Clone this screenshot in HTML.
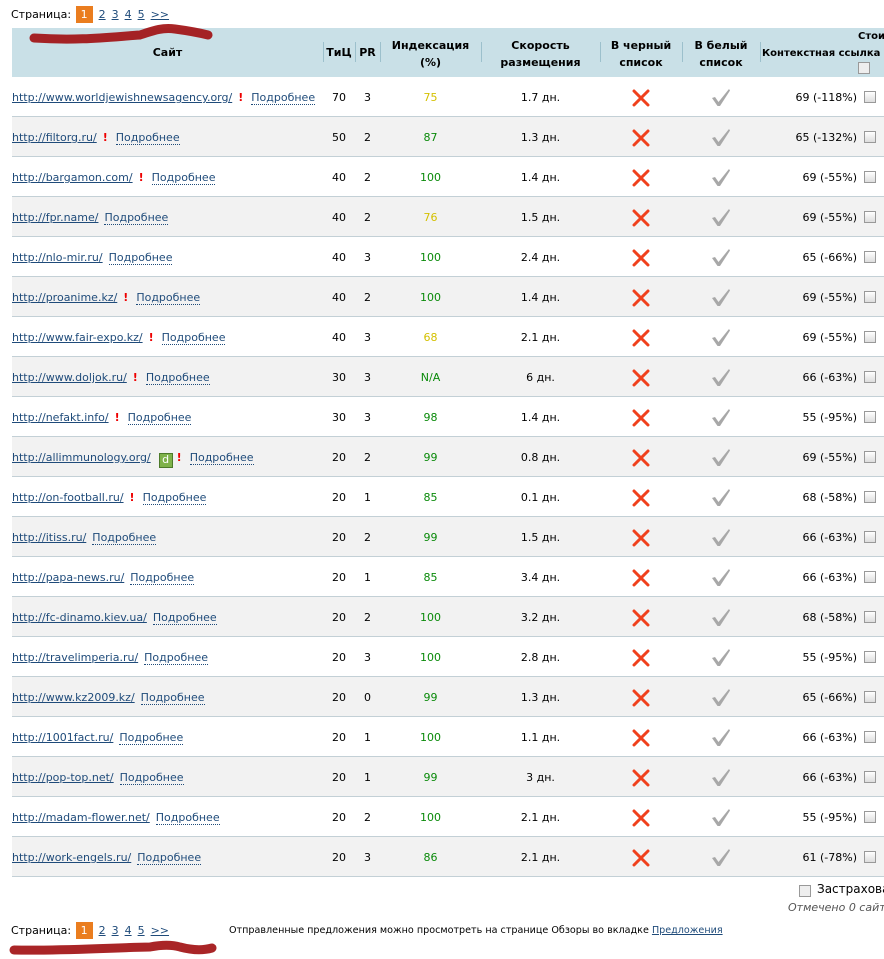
<!DOCTYPE html>
<html><head><meta charset="utf-8">
<style>
body{margin:0;width:884px;height:959px;overflow:hidden;background:#fff;font-family:"DejaVu Sans",Verdana,sans-serif;font-size:11px;color:#000;position:relative}
.pg{position:absolute;left:11px;font-size:11px;color:#000;z-index:3}
.pg a{color:#1f4b7a;text-decoration:underline;margin-left:6px}
.pg .cur{display:inline-block;background:#ea7d1f;color:#fff;padding:0 5px;margin-left:1px;line-height:17px}
.hd{position:absolute;left:12px;top:28px;width:872px;height:49px;background:#c9e0e7;font-weight:bold;font-size:11px}
.hd div{position:absolute;text-align:center;line-height:17px}
.sep{position:absolute;top:14px;height:20px;width:1px;background:#9cc0cc}
.r{position:absolute;left:12px;width:872px;height:39px;border-bottom:1px solid #c3d0d6;line-height:41px}
.r.g{background:#f2f2f2}
.r span{position:absolute;top:0}
.s{left:0;white-space:nowrap}
.s a{color:#1f4b7a;text-decoration:underline}
.s .p{color:#1f4b7a;text-decoration:none;border-bottom:1px dotted #1f4b7a;margin-left:6px}
.s b{color:#e00;margin-left:6px}
.s b+.p{margin-left:8px}
.t{left:311px;width:32px;text-align:center}
.pr{left:343px;width:25px;text-align:center}
.ix{left:368px;width:101px;text-align:center;color:#0a8a0a}
.ix.y{color:#d4c000}
.sp{left:469px;width:119px;text-align:center}
.x{left:588px;width:82px;text-align:center}
.c{left:670px;width:78px;text-align:center}
.pc{left:700px;width:145px;text-align:right}
.cb{left:852px;top:14px!important;width:10px;height:10px;border:1px solid #999;background:linear-gradient(#fff,#ddd)}
.d{display:inline-block;width:12px;height:13px;background:#7fb24a;color:#fff;border:1px solid #4d7a2a;line-height:12px;text-align:center;margin-left:8px;font-size:11px;vertical-align:-2px;font-style:normal}
.d+b{margin-left:4px}
.r svg{vertical-align:middle}
</style></head><body>
<div class="pg" style="top:6px">Страница: <span class="cur">1</span><a>2</a><a>3</a><a>4</a><a>5</a><a>&gt;&gt;</a></div>
<div class="hd">
<div style="left:0;width:311px;top:16px">Сайт</div>
<div class="sep" style="left:311px"></div>
<div style="left:311px;width:32px;top:16px">ТиЦ</div>
<div class="sep" style="left:343px"></div>
<div style="left:343px;width:25px;top:16px">PR</div>
<div class="sep" style="left:368px"></div>
<div style="left:368px;width:101px;top:9px">Индексация<br>(%)</div>
<div class="sep" style="left:469px"></div>
<div style="left:469px;width:119px;top:9px">Скорость<br>размещения</div>
<div class="sep" style="left:588px"></div>
<div style="left:588px;width:82px;top:9px">В черный<br>список</div>
<div class="sep" style="left:670px"></div>
<div style="left:670px;width:78px;top:9px">В белый<br>список</div>
<div class="sep" style="left:748px"></div>
<div style="left:750px;width:140px;top:0;text-align:left;white-space:nowrap;font-size:10px"><span style="position:absolute;left:96px">Стоимость</span><br>Контекстная ссылка</div>
<div style="left:846px;top:34px;width:10px;height:10px;border:1px solid #999;background:#eee"></div>
</div>
<svg style="position:absolute;left:0;top:0;z-index:2" width="884" height="959"><path d="M34 38 C80 41 110 37 140 35 C150 32 160 27 175 29 C190 31 200 33 208 35" stroke="#a00d10" stroke-width="9" fill="none" stroke-linecap="round" opacity=".9"/><path d="M14 950 C60 951 100 948 150 947 C160 945 170 944 180 947 C195 951 205 950 212 948" stroke="#a00d10" stroke-width="9" fill="none" stroke-linecap="round" opacity=".9"/></svg>
<svg width="0" height="0" style="position:absolute"><defs>
<symbol id="X" viewBox="0 0 18 18"><path d="M2 2 L16 16 M16 2 L2 16" stroke="#f0401c" stroke-width="3" stroke-linecap="round"/></symbol>
<symbol id="V" viewBox="0 0 18 18"><path d="M0 9 L3 8 L6.5 13 L17 0 L18 1.5 L8 17 L5.5 17 Z" fill="#a8a8a8"/></symbol>
</defs></svg>

<div class="r" style="top:77px"><span class="s"><a>http://www.worldjewishnewsagency.org/</a><b>!</b><a class="p">Подробнее</a></span><span class="t">70</span><span class="pr">3</span><span class="ix y">75</span><span class="sp">1.7 дн.</span><span class="x"><svg width="18" height="18"><use href="#X"/></svg></span><span class="c"><svg width="18" height="18"><use href="#V"/></svg></span><span class="pc">69 (-118%)</span><span class="cb"></span></div>
<div class="r g" style="top:117px"><span class="s"><a>http://filtorg.ru/</a><b>!</b><a class="p">Подробнее</a></span><span class="t">50</span><span class="pr">2</span><span class="ix">87</span><span class="sp">1.3 дн.</span><span class="x"><svg width="18" height="18"><use href="#X"/></svg></span><span class="c"><svg width="18" height="18"><use href="#V"/></svg></span><span class="pc">65 (-132%)</span><span class="cb"></span></div>
<div class="r" style="top:157px"><span class="s"><a>http://bargamon.com/</a><b>!</b><a class="p">Подробнее</a></span><span class="t">40</span><span class="pr">2</span><span class="ix">100</span><span class="sp">1.4 дн.</span><span class="x"><svg width="18" height="18"><use href="#X"/></svg></span><span class="c"><svg width="18" height="18"><use href="#V"/></svg></span><span class="pc">69 (-55%)</span><span class="cb"></span></div>
<div class="r g" style="top:197px"><span class="s"><a>http://fpr.name/</a><a class="p">Подробнее</a></span><span class="t">40</span><span class="pr">2</span><span class="ix y">76</span><span class="sp">1.5 дн.</span><span class="x"><svg width="18" height="18"><use href="#X"/></svg></span><span class="c"><svg width="18" height="18"><use href="#V"/></svg></span><span class="pc">69 (-55%)</span><span class="cb"></span></div>
<div class="r" style="top:237px"><span class="s"><a>http://nlo-mir.ru/</a><a class="p">Подробнее</a></span><span class="t">40</span><span class="pr">3</span><span class="ix">100</span><span class="sp">2.4 дн.</span><span class="x"><svg width="18" height="18"><use href="#X"/></svg></span><span class="c"><svg width="18" height="18"><use href="#V"/></svg></span><span class="pc">65 (-66%)</span><span class="cb"></span></div>
<div class="r g" style="top:277px"><span class="s"><a>http://proanime.kz/</a><b>!</b><a class="p">Подробнее</a></span><span class="t">40</span><span class="pr">2</span><span class="ix">100</span><span class="sp">1.4 дн.</span><span class="x"><svg width="18" height="18"><use href="#X"/></svg></span><span class="c"><svg width="18" height="18"><use href="#V"/></svg></span><span class="pc">69 (-55%)</span><span class="cb"></span></div>
<div class="r" style="top:317px"><span class="s"><a>http://www.fair-expo.kz/</a><b>!</b><a class="p">Подробнее</a></span><span class="t">40</span><span class="pr">3</span><span class="ix y">68</span><span class="sp">2.1 дн.</span><span class="x"><svg width="18" height="18"><use href="#X"/></svg></span><span class="c"><svg width="18" height="18"><use href="#V"/></svg></span><span class="pc">69 (-55%)</span><span class="cb"></span></div>
<div class="r g" style="top:357px"><span class="s"><a>http://www.doljok.ru/</a><b>!</b><a class="p">Подробнее</a></span><span class="t">30</span><span class="pr">3</span><span class="ix">N/A</span><span class="sp">6 дн.</span><span class="x"><svg width="18" height="18"><use href="#X"/></svg></span><span class="c"><svg width="18" height="18"><use href="#V"/></svg></span><span class="pc">66 (-63%)</span><span class="cb"></span></div>
<div class="r" style="top:397px"><span class="s"><a>http://nefakt.info/</a><b>!</b><a class="p">Подробнее</a></span><span class="t">30</span><span class="pr">3</span><span class="ix">98</span><span class="sp">1.4 дн.</span><span class="x"><svg width="18" height="18"><use href="#X"/></svg></span><span class="c"><svg width="18" height="18"><use href="#V"/></svg></span><span class="pc">55 (-95%)</span><span class="cb"></span></div>
<div class="r g" style="top:437px"><span class="s"><a>http://allimmunology.org/</a><i class="d">d</i><b>!</b><a class="p">Подробнее</a></span><span class="t">20</span><span class="pr">2</span><span class="ix">99</span><span class="sp">0.8 дн.</span><span class="x"><svg width="18" height="18"><use href="#X"/></svg></span><span class="c"><svg width="18" height="18"><use href="#V"/></svg></span><span class="pc">69 (-55%)</span><span class="cb"></span></div>
<div class="r" style="top:477px"><span class="s"><a>http://on-football.ru/</a><b>!</b><a class="p">Подробнее</a></span><span class="t">20</span><span class="pr">1</span><span class="ix">85</span><span class="sp">0.1 дн.</span><span class="x"><svg width="18" height="18"><use href="#X"/></svg></span><span class="c"><svg width="18" height="18"><use href="#V"/></svg></span><span class="pc">68 (-58%)</span><span class="cb"></span></div>
<div class="r g" style="top:517px"><span class="s"><a>http://itiss.ru/</a><a class="p">Подробнее</a></span><span class="t">20</span><span class="pr">2</span><span class="ix">99</span><span class="sp">1.5 дн.</span><span class="x"><svg width="18" height="18"><use href="#X"/></svg></span><span class="c"><svg width="18" height="18"><use href="#V"/></svg></span><span class="pc">66 (-63%)</span><span class="cb"></span></div>
<div class="r" style="top:557px"><span class="s"><a>http://papa-news.ru/</a><a class="p">Подробнее</a></span><span class="t">20</span><span class="pr">1</span><span class="ix">85</span><span class="sp">3.4 дн.</span><span class="x"><svg width="18" height="18"><use href="#X"/></svg></span><span class="c"><svg width="18" height="18"><use href="#V"/></svg></span><span class="pc">66 (-63%)</span><span class="cb"></span></div>
<div class="r g" style="top:597px"><span class="s"><a>http://fc-dinamo.kiev.ua/</a><a class="p">Подробнее</a></span><span class="t">20</span><span class="pr">2</span><span class="ix">100</span><span class="sp">3.2 дн.</span><span class="x"><svg width="18" height="18"><use href="#X"/></svg></span><span class="c"><svg width="18" height="18"><use href="#V"/></svg></span><span class="pc">68 (-58%)</span><span class="cb"></span></div>
<div class="r" style="top:637px"><span class="s"><a>http://travelimperia.ru/</a><a class="p">Подробнее</a></span><span class="t">20</span><span class="pr">3</span><span class="ix">100</span><span class="sp">2.8 дн.</span><span class="x"><svg width="18" height="18"><use href="#X"/></svg></span><span class="c"><svg width="18" height="18"><use href="#V"/></svg></span><span class="pc">55 (-95%)</span><span class="cb"></span></div>
<div class="r g" style="top:677px"><span class="s"><a>http://www.kz2009.kz/</a><a class="p">Подробнее</a></span><span class="t">20</span><span class="pr">0</span><span class="ix">99</span><span class="sp">1.3 дн.</span><span class="x"><svg width="18" height="18"><use href="#X"/></svg></span><span class="c"><svg width="18" height="18"><use href="#V"/></svg></span><span class="pc">65 (-66%)</span><span class="cb"></span></div>
<div class="r" style="top:717px"><span class="s"><a>http://1001fact.ru/</a><a class="p">Подробнее</a></span><span class="t">20</span><span class="pr">1</span><span class="ix">100</span><span class="sp">1.1 дн.</span><span class="x"><svg width="18" height="18"><use href="#X"/></svg></span><span class="c"><svg width="18" height="18"><use href="#V"/></svg></span><span class="pc">66 (-63%)</span><span class="cb"></span></div>
<div class="r g" style="top:757px"><span class="s"><a>http://pop-top.net/</a><a class="p">Подробнее</a></span><span class="t">20</span><span class="pr">1</span><span class="ix">99</span><span class="sp">3 дн.</span><span class="x"><svg width="18" height="18"><use href="#X"/></svg></span><span class="c"><svg width="18" height="18"><use href="#V"/></svg></span><span class="pc">66 (-63%)</span><span class="cb"></span></div>
<div class="r" style="top:797px"><span class="s"><a>http://madam-flower.net/</a><a class="p">Подробнее</a></span><span class="t">20</span><span class="pr">2</span><span class="ix">100</span><span class="sp">2.1 дн.</span><span class="x"><svg width="18" height="18"><use href="#X"/></svg></span><span class="c"><svg width="18" height="18"><use href="#V"/></svg></span><span class="pc">55 (-95%)</span><span class="cb"></span></div>
<div class="r g" style="top:837px"><span class="s"><a>http://work-engels.ru/</a><a class="p">Подробнее</a></span><span class="t">20</span><span class="pr">3</span><span class="ix">86</span><span class="sp">2.1 дн.</span><span class="x"><svg width="18" height="18"><use href="#X"/></svg></span><span class="c"><svg width="18" height="18"><use href="#V"/></svg></span><span class="pc">61 (-78%)</span><span class="cb"></span></div>

<div style="position:absolute;left:799px;top:885px;width:10px;height:10px;border:1px solid #999;background:#eee"></div>
<div style="position:absolute;left:817px;top:882px;font-size:12px;white-space:nowrap">Застраховать</div>
<div style="position:absolute;left:788px;top:901px;font-size:11px;font-style:italic;color:#555;white-space:nowrap">Отмечено 0 сайтов</div>
<div class="pg" style="top:922px">Страница: <span class="cur">1</span><a>2</a><a>3</a><a>4</a><a>5</a><a>&gt;&gt;</a></div>
<div style="position:absolute;left:229px;top:925px;font-size:9.6px;white-space:nowrap">Отправленные предложения можно просмотреть на странице Обзоры во вкладке <a style="color:#1f4b7a;text-decoration:underline">Предложения</a></div>
</body></html>
